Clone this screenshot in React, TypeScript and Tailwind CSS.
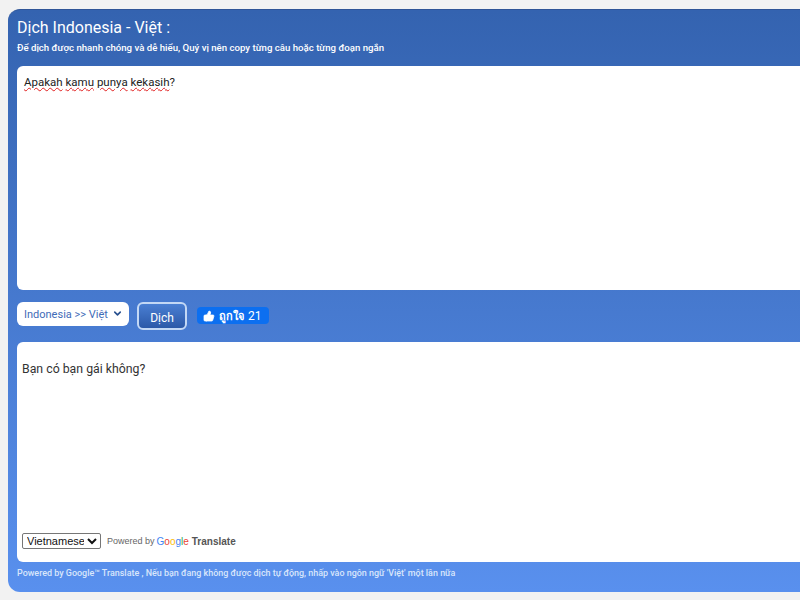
import { ChevronDown, ThumbsUp } from "lucide-react";

const FONT = "font-['Roboto','Noto_Sans',sans-serif]";

function GoogleWord() {
  return (
    <span className="font-['Liberation_Sans',sans-serif] text-[10px] font-normal leading-none">
      <span className="text-[#4285f4]">G</span>
      <span className="text-[#ea4335]">o</span>
      <span className="text-[#fbbc05]">o</span>
      <span className="text-[#4285f4]">g</span>
      <span className="text-[#34a853]">l</span>
      <span className="text-[#ea4335]">e</span>
    </span>
  );
}

function Wavy({ children }: { children: string }) {
  return (
    <span className="underline decoration-wavy decoration-[#e02020] decoration-1 underline-offset-1">
      {children}
    </span>
  );
}

export default function App() {
  return (
    <div className={`w-[800px] h-[600px] overflow-hidden bg-[#f2f2f2] pt-[9px] pl-[8px] ${FONT}`}>
      <div className="w-[830px] h-[583px] rounded-l-xl border-t border-[#2f5597] bg-gradient-to-b from-[#3463b0] to-[#5990ee] pl-[9px] flex flex-col">
        <h1 className="mt-[7px] text-[16px] leading-[22px] font-normal text-white">
          Dịch Indonesia - Việt :
        </h1>
        <p className="mt-[2px] text-[9.65px] leading-[14px] font-medium text-white">
          Để dịch được nhanh chóng và dễ hiểu, Quý vị nên copy từng câu hoặc từng đoạn ngắn
        </p>

        <div className="mt-[11px] h-[224px] rounded-l-md bg-white px-[7px] pt-[8px] text-[11.5px] leading-[16px] text-[#222]">
          <Wavy>Apakah</Wavy> <Wavy>kamu</Wavy> <Wavy>punya</Wavy> <Wavy>kekasih</Wavy>?
        </div>

        <div className="mt-[12px] h-[28px] flex items-start">
          <div className="w-[112px] h-[24px] rounded-md bg-white flex items-center pl-[7px] pt-[3px] text-[11px] text-[#3f6cb8]">
            <span>Indonesia &gt;&gt; Việt</span>
            <ChevronDown size={11} strokeWidth={3.5} className="ml-[4px] -mt-[5px] text-[#28508f]" />
          </div>
          <button className="ml-[8px] w-[50px] h-[28px] rounded-md border-2 border-[#c3d8f5] bg-gradient-to-b from-[#4a7fd3] to-[#2c59a8] pt-[3px] text-[12px] text-white">
            Dịch
          </button>
          <div className="ml-[10px] mt-[5px] w-[72px] h-[17px] rounded-sm bg-[#0c6ff0] flex items-center pl-[6px] text-[12px] leading-none text-white">
            <ThumbsUp size={12} fill="white" strokeWidth={1.5} />
            <span className="ml-[4px] font-['Noto_Sans',sans-serif] font-semibold text-[11px]">ถูกใจ</span>
            <span className="ml-[4px]">21</span>
          </div>
        </div>

        <div className="mt-[12px] h-[220px] rounded-l-md bg-white pl-[5px] pr-[6px] flex flex-col">
          <p className="mt-[19px] text-[12.3px] leading-[16px] text-[#333]">Bạn có bạn gái không?</p>
          <div className="mt-auto mb-[10px] flex items-center">
            <select className="w-[79px] h-[16px] rounded-[2px] border border-[#767676] bg-white text-[11px] leading-none text-[#111] font-['Liberation_Sans',sans-serif]">
              <option>Vietnamese</option>
            </select>
            <span className="ml-[6px] mt-[2px] text-[9px] text-[#666] font-['Liberation_Sans',sans-serif]">Powered by</span>
            <span className="ml-[2px] -mt-[2px]">
              <GoogleWord />
            </span>
            <span className="ml-[3px] mt-[1px] text-[10px] font-bold text-[#555] font-['Liberation_Sans',sans-serif]">Translate</span>
          </div>
        </div>

        <p className="mt-[5px] text-[8.95px] leading-[12px] font-medium text-[#d9e6fb]">
          Powered by Google™ Translate , Nếu bạn đang không được dịch tự động, nhấp vào ngôn ngữ 'Việt' một lần nữa
        </p>
      </div>
    </div>
  );
}
